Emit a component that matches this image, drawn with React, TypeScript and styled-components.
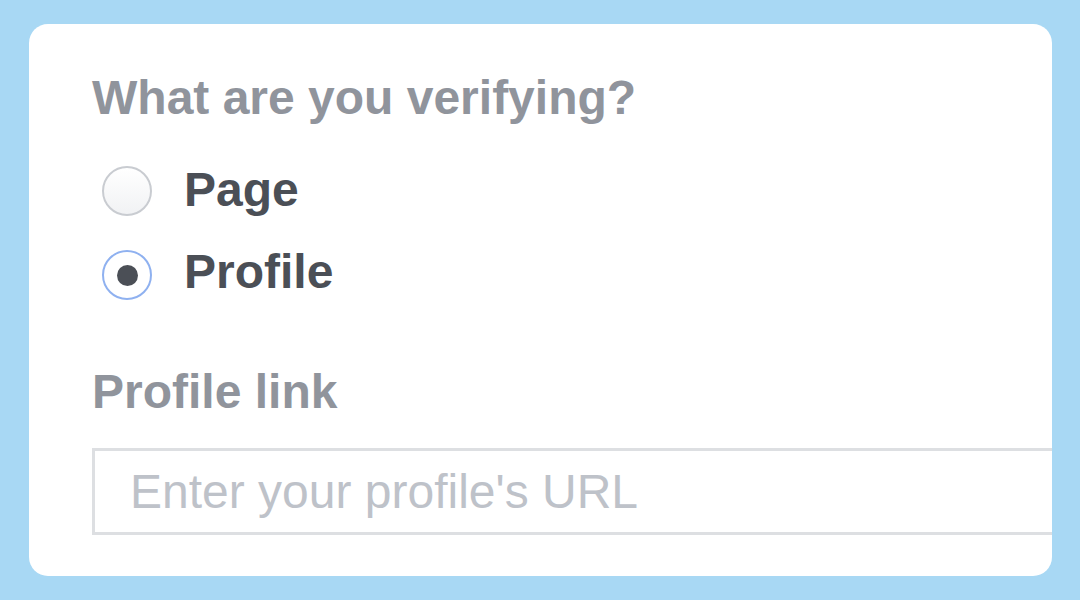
import React, { useState } from "react";
import styled, { createGlobalStyle } from "styled-components";

const GlobalStyle = createGlobalStyle`
    html, body {
        margin: 0;
        padding: 0;
        background: #a8d8f4;
    }
    body {
        font-family: "Liberation Sans", Arial, Helvetica, sans-serif;
    }
`

const Page = styled.div`
    width: 1080px;
    height: 600px;
    padding: 24px 28px 24px 29px;
    box-sizing: border-box;
    display: flex;
`

const Card = styled.div`
    flex: 1;
    background: #fff;
    border-radius: 19px;
    overflow: hidden;
    padding: 46px 0 0 63px;
    display: flex;
    flex-direction: column;
`

const Label = styled.div`
    font-size: 48px;
    line-height: 56px;
    font-weight: 700;
    color: #90949c;
    white-space: nowrap;
`

const Options = styled.div`
    display: flex;
    flex-direction: column;
    gap: 26px;
    margin: 36px 0 64px 10px;
`

const Option = styled.label`
    display: flex;
    align-items: center;
    gap: 32px;
    cursor: pointer;
`

const Radio = styled.span<{ $checked: boolean }>`
    width: 50px;
    height: 50px;
    border-radius: 50%;
    box-sizing: border-box;
    border: 2px solid ${p => (p.$checked ? "#8fb1f0" : "#c9ccd1")};
    background: ${p => (p.$checked ? "#fff" : "linear-gradient(#ffffff, #f1f2f4)")};
    display: flex;
    align-items: center;
    justify-content: center;
    flex-shrink: 0;
    margin-top: ${p => (p.$checked ? "6px" : "2px")};

    &::after {
        content: "";
        width: 21px;
        height: 21px;
        border-radius: 50%;
        background: #4b4f56;
        display: ${p => (p.$checked ? "block" : "none")};
    }
`

const OptionText = styled.span`
    font-size: 48px;
    line-height: 56px;
    font-weight: 700;
    color: #4b4f56;
`

const Input = styled.input`
    margin-top: 28px;
    width: 1100px;
    height: 87px;
    box-sizing: border-box;
    border: 3px solid #dddfe2;
    padding: 0 35px;
    font-family: "Liberation Sans", Arial, Helvetica, sans-serif;
    font-size: 48px;
    color: #1d2129;
    outline: none;

    &::placeholder {
        color: #bec2c9;
    }
`

const App = () => {
    const [choice, setChoice] = useState("profile");

    return (
        <Page>
            <GlobalStyle />
            <Card>
                <Label>What are you verifying?</Label>
                <Options>
                    <Option onClick={() => setChoice("page")}>
                        <Radio $checked={choice === "page"} />
                        <OptionText>Page</OptionText>
                    </Option>
                    <Option onClick={() => setChoice("profile")}>
                        <Radio $checked={choice === "profile"} />
                        <OptionText>Profile</OptionText>
                    </Option>
                </Options>
                <Label>{choice === "page" ? "Page link" : "Profile link"}</Label>
                <Input placeholder={choice === "page" ? "Enter your page's URL" : "Enter your profile's URL"} />
            </Card>
        </Page>
    )
}

export default App;
